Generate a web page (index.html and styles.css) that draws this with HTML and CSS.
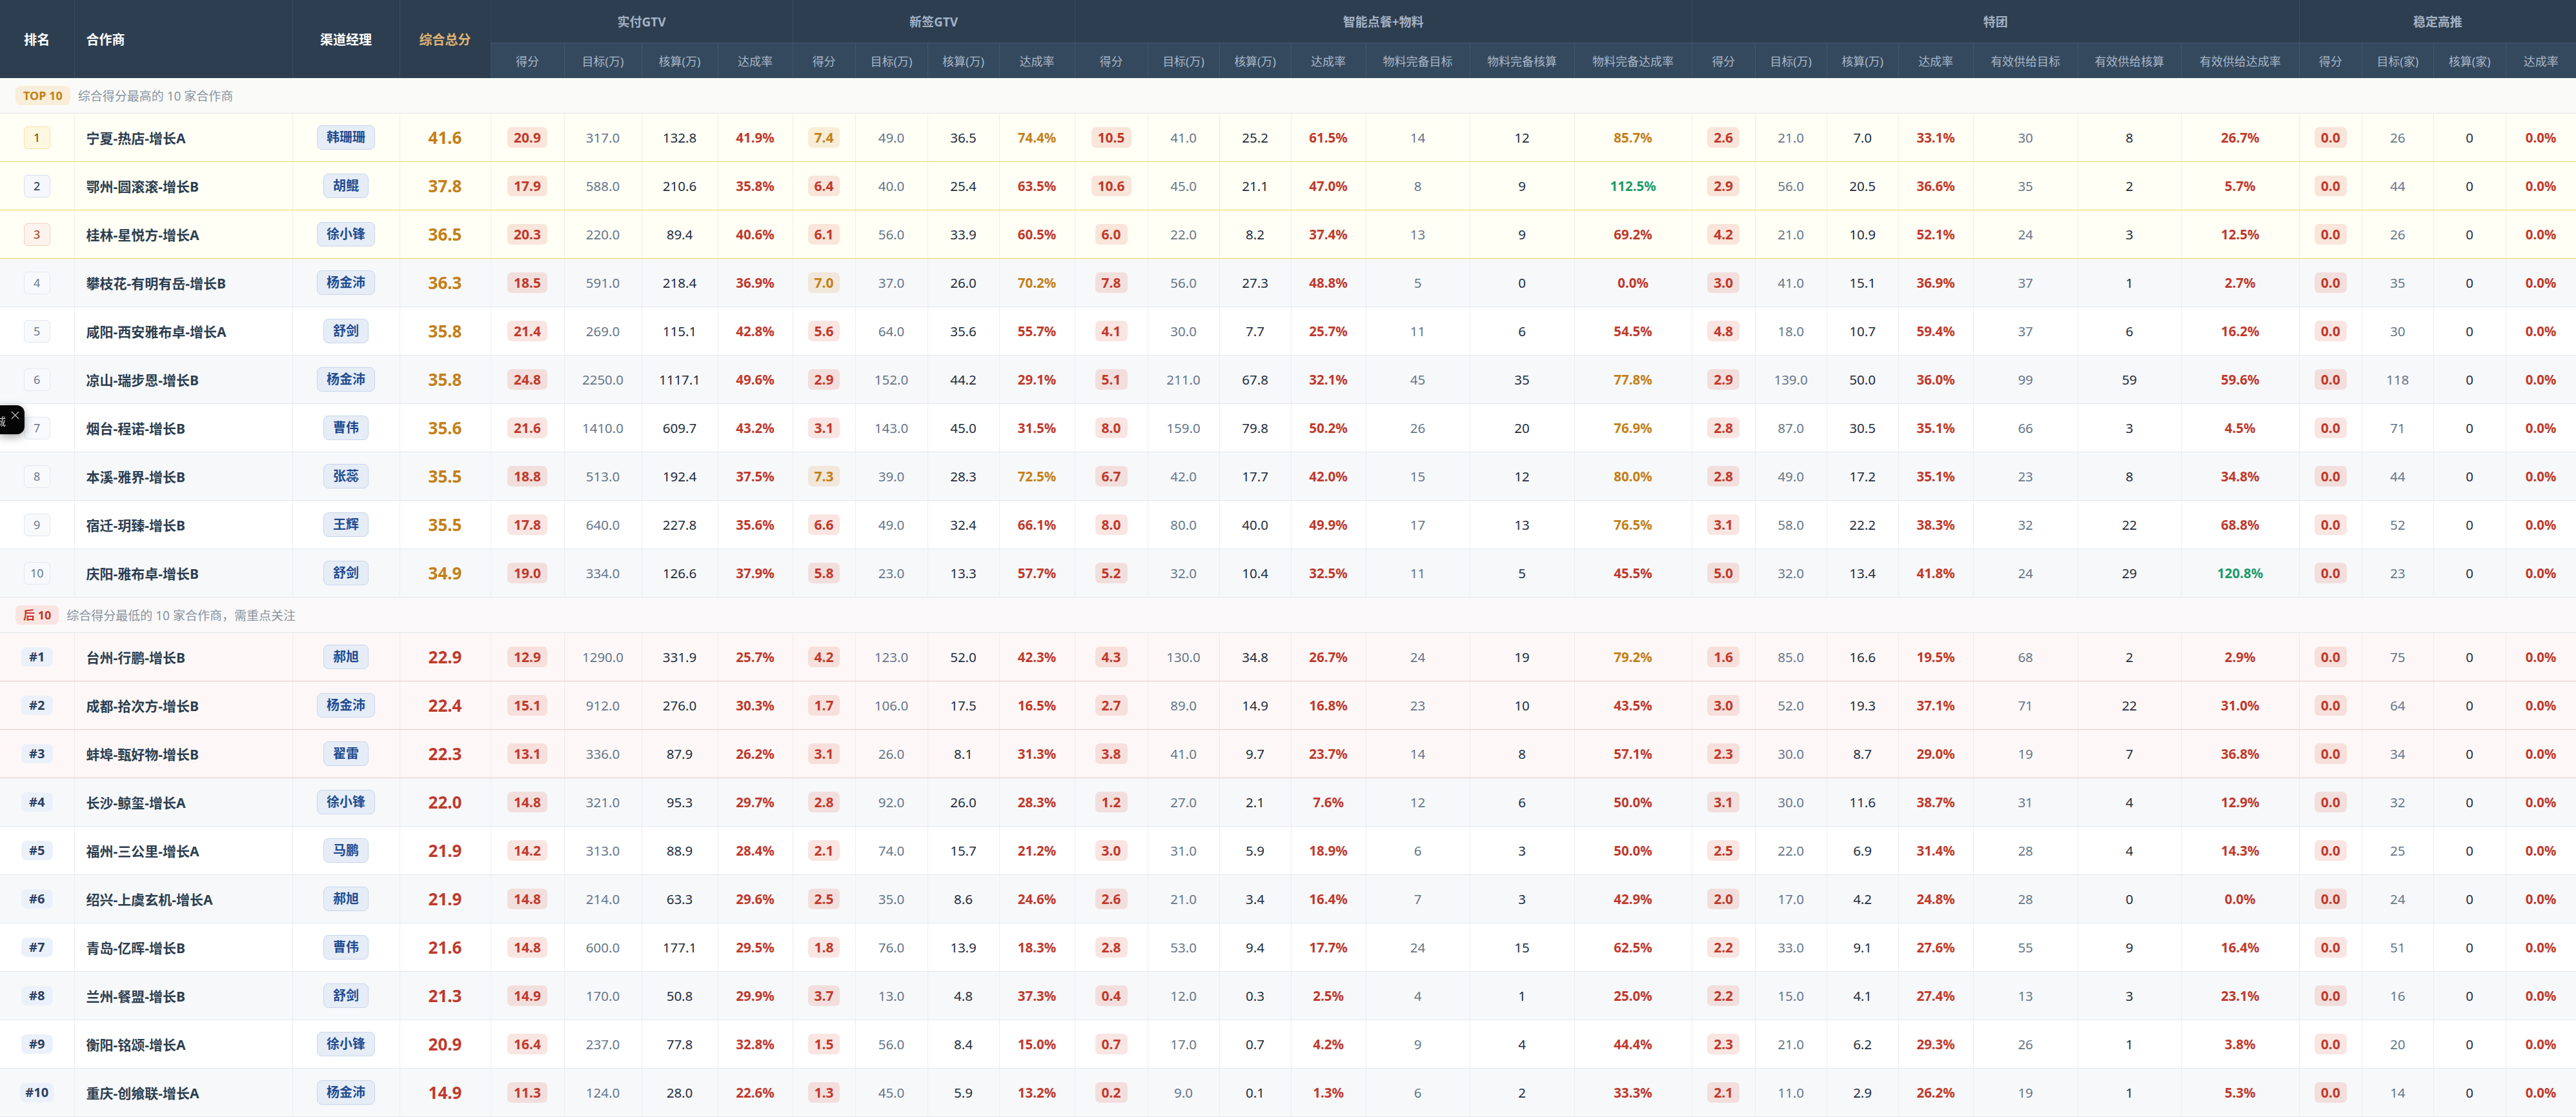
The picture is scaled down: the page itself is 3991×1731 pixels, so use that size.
FILE: index.html
```html
<!DOCTYPE html>
<html lang="zh-CN">
<head>
<meta charset="utf-8">
<title>合作商综合得分排名</title>
<link rel="stylesheet" href="styles.css">
</head>
<body>
<table class="board">
  <colgroup>
    <col><col><col><col>
    <col><col><col><col>
    <col><col><col><col>
    <col><col><col><col><col><col><col>
    <col><col><col><col><col><col><col>
    <col><col><col><col>
  </colgroup>
  <thead>
    <tr class="grp">
      <th rowspan="2" class="h-main">排名</th>
      <th rowspan="2" class="h-main h-left">合作商</th>
      <th rowspan="2" class="h-main">渠道经理</th>
      <th rowspan="2" class="h-main h-total">综合总分</th>
      <th colspan="4" class="h-grp">实付GTV</th>
      <th colspan="4" class="h-grp">新签GTV</th>
      <th colspan="7" class="h-grp">智能点餐+物料</th>
      <th colspan="7" class="h-grp">特团</th>
      <th colspan="4" class="h-grp">稳定高推</th>
    </tr>
    <tr class="sub">
      <th>得分</th><th>目标(万)</th><th>核算(万)</th><th>达成率</th>
      <th>得分</th><th>目标(万)</th><th>核算(万)</th><th>达成率</th>
      <th>得分</th><th>目标(万)</th><th>核算(万)</th><th>达成率</th><th>物料完备目标</th><th>物料完备核算</th><th>物料完备达成率</th>
      <th>得分</th><th>目标(万)</th><th>核算(万)</th><th>达成率</th><th>有效供给目标</th><th>有效供给核算</th><th>有效供给达成率</th>
      <th>得分</th><th>目标(家)</th><th>核算(家)</th><th>达成率</th>
    </tr>
  </thead>
  <tbody id="top-body">
    <tr class="sec sec-top">
      <td colspan="30"><span class="sec-tag tag-top">TOP 10</span><span class="sec-desc">综合得分最高的 10 家合作商</span></td>
    </tr>
  </tbody>
  <tbody id="bottom-body">
    <tr class="sec sec-bottom">
      <td colspan="30"><span class="sec-tag tag-bottom">后 10</span><span class="sec-desc">综合得分最低的 10 家合作商，需重点关注</span></td>
    </tr>
  </tbody>
</table>

<div class="float-tip">
  <span class="ft-txt">诚</span>
  <svg class="ft-x" viewBox="0 0 14 14" width="14" height="14"><path d="M1 1 L13 13 M13 1 L1 13" /></svg>
</div>

<script src="script.js"></script>
</body>
</html>
```

FILE: styles.css
```css
html, body {
  margin: 0;
  padding: 0;
  background: #ffffff;
  font-family: "Noto Sans", "Noto Sans CJK SC", sans-serif;
  color: #2c3e50;
}

.board {
  border-collapse: collapse;
  table-layout: fixed;
  width: 3991px;
}

/* column widths */
.board col:nth-child(1) { width: 115px; }
.board col:nth-child(2) { width: 338px; }
.board col:nth-child(3) { width: 166px; }
.board col:nth-child(4) { width: 141px; }
.board col:nth-child(5) { width: 114px; }
.board col:nth-child(6) { width: 120px; }
.board col:nth-child(7) { width: 118px; }
.board col:nth-child(8) { width: 116px; }
.board col:nth-child(9) { width: 97px; }
.board col:nth-child(10) { width: 112px; }
.board col:nth-child(11) { width: 111px; }
.board col:nth-child(12) { width: 117px; }
.board col:nth-child(13) { width: 113px; }
.board col:nth-child(14) { width: 111px; }
.board col:nth-child(15) { width: 111px; }
.board col:nth-child(16) { width: 116px; }
.board col:nth-child(17) { width: 161px; }
.board col:nth-child(18) { width: 162px; }
.board col:nth-child(19) { width: 182px; }
.board col:nth-child(20) { width: 98px; }
.board col:nth-child(21) { width: 111px; }
.board col:nth-child(22) { width: 111px; }
.board col:nth-child(23) { width: 116px; }
.board col:nth-child(24) { width: 162px; }
.board col:nth-child(25) { width: 160px; }
.board col:nth-child(26) { width: 183px; }
.board col:nth-child(27) { width: 97px; }
.board col:nth-child(28) { width: 111px; }
.board col:nth-child(29) { width: 112px; }
.board col:nth-child(30) { width: 109px; }

/* ---------- header ---------- */
.board thead th {
  padding: 0;
  text-align: center;
  vertical-align: middle;
  white-space: nowrap;
}
.grp { height: 66px; }
.sub { height: 55px; }

.grp th {
  background: #2d3e50;
  border-right: 1px solid #3a4c60;
}
.h-main {
  color: #ffffff;
  font-size: 20px;
  font-weight: 700;
}
.h-left {
  text-align: left !important;
  padding-left: 18px !important;
}
.h-total { color: #e0b272 !important; }
.h-grp {
  color: #a3b2c4;
  font-size: 19px;
  font-weight: 700;
  border-bottom: 1px solid #435870;
}
.sub th {
  background: #34495e;
  color: #a8b7c9;
  font-size: 18px;
  font-weight: 400;
  border-right: 1px solid #41566d;
}

/* ---------- section rows ---------- */
.sec td {
  padding: 0 0 0 24px;
  height: 54px;
  border-bottom: 1px solid #e2e6eb;
  white-space: nowrap;
}
.sec-top td { background: #fafbf8; }
.sec-bottom td { background: #faf8f8; }

.sec-tag {
  display: inline-block;
  height: 30px;
  line-height: 30px;
  padding: 0 12px;
  border-radius: 8px;
  font-size: 18px;
  font-weight: 700;
  vertical-align: middle;
}
.tag-top { background: #f8eed9; color: #c47f17; }
.tag-bottom { background: #fae4e2; color: #c0392b; }
.sec-desc {
  margin-left: 12px;
  font-size: 19px;
  color: #8994a1;
  vertical-align: middle;
}

/* ---------- data rows ---------- */
.row td {
  height: 74px;
  padding: 0;
  text-align: center;
  vertical-align: middle;
  border-right: 1px solid #eceef1;
  border-bottom: 1px solid #e4e7eb;
  font-size: 20.5px;
  white-space: nowrap;
}
.row { background: #ffffff; }
.row.alt { background: #f7f8fa; }
.row.hi { background: #fffff6; }
.row.hi td { border-bottom-color: #e9d44e; border-right-color: #efefe8; }
.row.lo { background: #fdf8f7; }
.row.lo td { border-bottom-color: #efc8c8; border-right-color: #f1eaea; }

.row td.name {
  text-align: left;
  padding-left: 18px;
  font-size: 21px;
  font-weight: 700;
  color: #2c3e50;
}

/* rank badges */
.rk {
  display: inline-block;
  box-sizing: border-box;
  width: 41px;
  height: 35px;
  line-height: 33px;
  border-radius: 6px;
  border: 1px solid #e3e7ed;
  background: #f8f9fb;
  color: #6a7b90;
  font-size: 18px;
  font-weight: 400;
}
.rk.r1 { background: #fff8e1; border-color: #f4e1a3; color: #7a5c14; font-weight: 500; }
.rk.r2 { background: #f5f7fc; border-color: #d8e0ee; color: #34495e; font-weight: 500; }
.rk.r3 { background: #fff3ed; border-color: #f4cfbd; color: #a4532b; font-weight: 500; }

.rb {
  display: inline-block;
  height: 30px;
  line-height: 30px;
  padding: 0 8px;
  min-width: 33px;
  border-radius: 8px;
  background: #ebf1fa;
  color: #2c3e60;
  font-size: 20px;
  font-weight: 700;
}

/* manager pill */
.mgr {
  display: inline-block;
  height: 36px;
  line-height: 36px;
  padding: 0 14px;
  border-radius: 8px;
  border: 1px solid #c8d5ea;
  background: #e6edf7;
  color: #1f4b8f;
  font-size: 20px;
  font-weight: 700;
}

/* total score */
.tot {
  font-size: 26px;
  font-weight: 700;
}
.tot.a { color: #c47f17; }
.tot.r { color: #c0392b; }

/* score badges */
.sc {
  display: inline-block;
  height: 32px;
  line-height: 32px;
  padding: 0 10px;
  border-radius: 7px;
  font-size: 21px;
  font-weight: 700;
}
.sc.r { background: rgba(214, 70, 50, 0.14); color: #c0392b; }
.sc.a { background: rgba(214, 150, 60, 0.17); color: #c47f17; }

.tg { color: #66768a; }
.ac { color: #1f2d3d; }

.rt { font-weight: 700; }
.rt.r { color: #c0392b; }
.rt.a { color: #c47f17; }
.rt.g { color: #1e9a68; }

/* floating widget at the left edge */
.float-tip {
  position: fixed;
  left: 0;
  top: 628px;
  width: 38px;
  height: 45px;
  background: #050505;
  border-radius: 0 12px 12px 0;
  box-shadow: 0 4px 14px rgba(0, 0, 0, 0.35);
  overflow: hidden;
}
.ft-txt {
  position: absolute;
  left: -8px;
  top: 16px;
  font-size: 17px;
  line-height: 17px;
  color: #cfcfcf;
  font-family: "Noto Sans CJK SC", sans-serif;
}
.ft-x {
  position: absolute;
  left: 17px;
  top: 9px;
  width: 13px;
  height: 13px;
  fill: none;
  stroke: #b8b8b8;
  stroke-width: 1.4;
}
```

FILE: script.js
```js
(function () {
  var topRows = [
    ["宁夏-热店-增长A","韩珊珊","41.6","20.9 317.0 132.8 41.9%","7.4 49.0 36.5 74.4%","10.5 41.0 25.2 61.5% 14 12 85.7%","2.6 21.0 7.0 33.1% 30 8 26.7%","0.0 26 0 0.0%"],
    ["鄂州-圆滚滚-增长B","胡鲲","37.8","17.9 588.0 210.6 35.8%","6.4 40.0 25.4 63.5%","10.6 45.0 21.1 47.0% 8 9 112.5%","2.9 56.0 20.5 36.6% 35 2 5.7%","0.0 44 0 0.0%"],
    ["桂林-星悦方-增长A","徐小锋","36.5","20.3 220.0 89.4 40.6%","6.1 56.0 33.9 60.5%","6.0 22.0 8.2 37.4% 13 9 69.2%","4.2 21.0 10.9 52.1% 24 3 12.5%","0.0 26 0 0.0%"],
    ["攀枝花-有明有岳-增长B","杨金沛","36.3","18.5 591.0 218.4 36.9%","7.0 37.0 26.0 70.2%","7.8 56.0 27.3 48.8% 5 0 0.0%","3.0 41.0 15.1 36.9% 37 1 2.7%","0.0 35 0 0.0%"],
    ["咸阳-西安雅布卓-增长A","舒剑","35.8","21.4 269.0 115.1 42.8%","5.6 64.0 35.6 55.7%","4.1 30.0 7.7 25.7% 11 6 54.5%","4.8 18.0 10.7 59.4% 37 6 16.2%","0.0 30 0 0.0%"],
    ["凉山-瑞步恩-增长B","杨金沛","35.8","24.8 2250.0 1117.1 49.6%","2.9 152.0 44.2 29.1%","5.1 211.0 67.8 32.1% 45 35 77.8%","2.9 139.0 50.0 36.0% 99 59 59.6%","0.0 118 0 0.0%"],
    ["烟台-程诺-增长B","曹伟","35.6","21.6 1410.0 609.7 43.2%","3.1 143.0 45.0 31.5%","8.0 159.0 79.8 50.2% 26 20 76.9%","2.8 87.0 30.5 35.1% 66 3 4.5%","0.0 71 0 0.0%"],
    ["本溪-雅界-增长B","张蕊","35.5","18.8 513.0 192.4 37.5%","7.3 39.0 28.3 72.5%","6.7 42.0 17.7 42.0% 15 12 80.0%","2.8 49.0 17.2 35.1% 23 8 34.8%","0.0 44 0 0.0%"],
    ["宿迁-玥臻-增长B","王辉","35.5","17.8 640.0 227.8 35.6%","6.6 49.0 32.4 66.1%","8.0 80.0 40.0 49.9% 17 13 76.5%","3.1 58.0 22.2 38.3% 32 22 68.8%","0.0 52 0 0.0%"],
    ["庆阳-雅布卓-增长B","舒剑","34.9","19.0 334.0 126.6 37.9%","5.8 23.0 13.3 57.7%","5.2 32.0 10.4 32.5% 11 5 45.5%","5.0 32.0 13.4 41.8% 24 29 120.8%","0.0 23 0 0.0%"]
  ];

  var bottomRows = [
    ["台州-行鹏-增长B","郝旭","22.9","12.9 1290.0 331.9 25.7%","4.2 123.0 52.0 42.3%","4.3 130.0 34.8 26.7% 24 19 79.2%","1.6 85.0 16.6 19.5% 68 2 2.9%","0.0 75 0 0.0%"],
    ["成都-拾次方-增长B","杨金沛","22.4","15.1 912.0 276.0 30.3%","1.7 106.0 17.5 16.5%","2.7 89.0 14.9 16.8% 23 10 43.5%","3.0 52.0 19.3 37.1% 71 22 31.0%","0.0 64 0 0.0%"],
    ["蚌埠-甄好物-增长B","翟雷","22.3","13.1 336.0 87.9 26.2%","3.1 26.0 8.1 31.3%","3.8 41.0 9.7 23.7% 14 8 57.1%","2.3 30.0 8.7 29.0% 19 7 36.8%","0.0 34 0 0.0%"],
    ["长沙-鲸玺-增长A","徐小锋","22.0","14.8 321.0 95.3 29.7%","2.8 92.0 26.0 28.3%","1.2 27.0 2.1 7.6% 12 6 50.0%","3.1 30.0 11.6 38.7% 31 4 12.9%","0.0 32 0 0.0%"],
    ["福州-三公里-增长A","马鹏","21.9","14.2 313.0 88.9 28.4%","2.1 74.0 15.7 21.2%","3.0 31.0 5.9 18.9% 6 3 50.0%","2.5 22.0 6.9 31.4% 28 4 14.3%","0.0 25 0 0.0%"],
    ["绍兴-上虞玄机-增长A","郝旭","21.9","14.8 214.0 63.3 29.6%","2.5 35.0 8.6 24.6%","2.6 21.0 3.4 16.4% 7 3 42.9%","2.0 17.0 4.2 24.8% 28 0 0.0%","0.0 24 0 0.0%"],
    ["青岛-亿晖-增长B","曹伟","21.6","14.8 600.0 177.1 29.5%","1.8 76.0 13.9 18.3%","2.8 53.0 9.4 17.7% 24 15 62.5%","2.2 33.0 9.1 27.6% 55 9 16.4%","0.0 51 0 0.0%"],
    ["兰州-餐盟-增长B","舒剑","21.3","14.9 170.0 50.8 29.9%","3.7 13.0 4.8 37.3%","0.4 12.0 0.3 2.5% 4 1 25.0%","2.2 15.0 4.1 27.4% 13 3 23.1%","0.0 16 0 0.0%"],
    ["衡阳-铭颂-增长A","徐小锋","20.9","16.4 237.0 77.8 32.8%","1.5 56.0 8.4 15.0%","0.7 17.0 0.7 4.2% 9 4 44.4%","2.3 21.0 6.2 29.3% 26 1 3.8%","0.0 20 0 0.0%"],
    ["重庆-创飨联-增长A","杨金沛","14.9","11.3 124.0 28.0 22.6%","1.3 45.0 5.9 13.2%","0.2 9.0 0.1 1.3% 6 2 33.3%","2.1 11.0 2.9 26.2% 19 1 5.3%","0.0 14 0 0.0%"]
  ];

  var maxScore = [40, 10, 20, 10, 10];

  function rateClass(text) {
    var v = parseFloat(text);
    if (v >= 100) return "g";
    if (v >= 70) return "a";
    return "r";
  }
  function scoreClass(text, max) {
    return parseFloat(text) / max >= 0.7 ? "a" : "r";
  }

  // column kinds per group position: s=score, t=target, c=actual, p=rate
  var kinds = ["s", "t", "c", "p", "t", "c", "p"];

  function groupCells(str, gi) {
    var vals = str.split(" ");
    var html = "";
    for (var i = 0; i < vals.length; i++) {
      var k = kinds[i], v = vals[i];
      if (k === "s") html += '<td><span class="sc ' + scoreClass(v, maxScore[gi]) + '">' + v + "</span></td>";
      else if (k === "t") html += '<td class="tg">' + v + "</td>";
      else if (k === "c") html += '<td class="ac">' + v + "</td>";
      else html += '<td class="rt ' + rateClass(v) + '">' + v + "</td>";
    }
    return html;
  }

  function build(rows, isTop) {
    var out = "";
    rows.forEach(function (r, idx) {
      var cls = "row";
      if (idx < 3) cls += isTop ? " hi" : " lo";
      else if (idx % 2 === 1) cls += " alt";
      var rank = isTop
        ? '<span class="rk' + (idx < 3 ? " r" + (idx + 1) : "") + '">' + (idx + 1) + "</span>"
        : '<span class="rb">#' + (idx + 1) + "</span>";
      out += '<tr class="' + cls + '">';
      out += "<td>" + rank + "</td>";
      out += '<td class="name">' + r[0] + "</td>";
      out += '<td><span class="mgr">' + r[1] + "</span></td>";
      out += '<td><span class="tot ' + (isTop ? "a" : "r") + '">' + r[2] + "</span></td>";
      for (var g = 0; g < 5; g++) out += groupCells(r[3 + g], g);
      out += "</tr>";
    });
    return out;
  }

  document.getElementById("top-body").insertAdjacentHTML("beforeend", build(topRows, true));
  document.getElementById("bottom-body").insertAdjacentHTML("beforeend", build(bottomRows, false));
})();
```
